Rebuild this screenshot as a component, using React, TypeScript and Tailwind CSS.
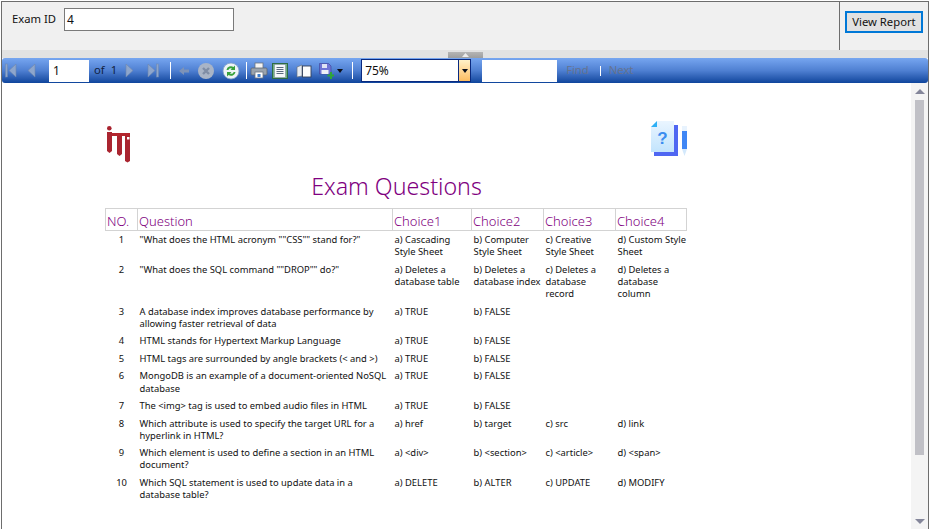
const questions = [
  { no: "1", q: '"What does the HTML acronym ""CSS"" stand for?"', c: ["a) Cascading Style Sheet", "b) Computer Style Sheet", "c) Creative Style Sheet", "d) Custom Style Sheet"] },
  { no: "2", q: '"What does the SQL command ""DROP"" do?"', c: ["a) Deletes a database table", "b) Deletes a database index", "c) Deletes a database record", "d) Deletes a database column"] },
  { no: "3", q: "A database index improves database performance by allowing faster retrieval of data", c: ["a) TRUE", "b) FALSE", "", ""] },
  { no: "4", q: "HTML stands for Hypertext Markup Language", c: ["a) TRUE", "b) FALSE", "", ""] },
  { no: "5", q: "HTML tags are surrounded by angle brackets (< and >)", c: ["a) TRUE", "b) FALSE", "", ""] },
  { no: "6", q: "MongoDB is an example of a document-oriented NoSQL database", c: ["a) TRUE", "b) FALSE", "", ""] },
  { no: "7", q: "The <img> tag is used to embed audio files in HTML", c: ["a) TRUE", "b) FALSE", "", ""] },
  { no: "8", q: "Which attribute is used to specify the target URL for a hyperlink in HTML?", c: ["a) href", "b) target", "c) src", "d) link"] },
  { no: "9", q: "Which element is used to define a section in an HTML document?", c: ["a) <div>", "b) <section>", "c) <article>", "d) <span>"] },
  { no: "10", q: "Which SQL statement is used to update data in a database table?", c: ["a) DELETE", "b) ALTER", "c) UPDATE", "d) MODIFY"] },
];

function Sep() {
  return <div className="h-[17px] w-px bg-white" />;
}

function NavIcon({ flip, bar }: { flip?: boolean; bar?: boolean }) {
  return (
    <svg width="12" height="15" viewBox="0 0 12 15" className={flip ? "-scale-x-100" : ""}>
      {bar && <rect x="0.5" y="1" width="2" height="13" fill="#8ea6cc" stroke="#6f87ad" strokeWidth="0.5" />}
      <path d="M11 1v13L4 7.500z" fill="#8ea6cc" stroke="#6f87ad" strokeWidth="0.6" />
    </svg>
  );
}

function Toolbar() {
  return (
    <div className="flex h-[25px] items-center rounded-[3px] bg-gradient-to-b from-[#77a6f0] via-[#4f80d2] to-[#0e459c] text-[11.25px]">
      <div className="ml-[3px]"><NavIcon bar /></div>
      <div className="ml-[7px]"><NavIcon /></div>
      <div className="ml-[13px] flex h-[22px] w-[40px] items-center bg-white pl-[4px] text-[12px] text-[#111]">1</div>
      <span className="ml-[5px] text-[#10213f]">of</span>
      <span className="ml-[6px] text-[#10213f]">1</span>
      <div className="ml-[8px]"><NavIcon flip /></div>
      <div className="ml-[10px]"><NavIcon flip bar /></div>
      <div className="ml-[11px]"><Sep /></div>
      <svg width="12" height="10" viewBox="0 0 12 10" className="ml-[7px]">
        <path d="M1 5l5-4v2.500h5v3H6V9z" fill="#7d93b8" />
      </svg>
      <svg width="18" height="18" viewBox="0 0 18 18" className="ml-[7px]">
        <circle cx="9" cy="9" r="8" fill="#a9b4c6" />
        <path d="M6 6l6 6M12 6l-6 6" stroke="#7f8da5" strokeWidth="2.400" />
      </svg>
      <svg width="18" height="18" viewBox="0 0 18 18" className="ml-[7px]">
        <circle cx="9" cy="9" r="8" fill="#eef3f6" stroke="#7f9fc8" strokeWidth="0.8" />
        <path d="M4.500 8a4.500 4.500 0 0 1 7-3l1.500-1.500V8H8.500L10 6.500A2.800 2.800 0 0 0 6.300 8z" fill="#38a13c" />
        <path d="M13.500 10a4.500 4.500 0 0 1-7 3L5 14.500V10h4.500L8 11.500A2.800 2.800 0 0 0 11.700 10z" fill="#38a13c" />
      </svg>
      <div className="ml-[6px]"><Sep /></div>
      <svg width="18" height="17" viewBox="0 0 18 17" className="ml-[3px]">
        <rect x="5" y="1" width="8" height="6" fill="#f4f4f4" stroke="#6b7480" strokeWidth="0.8" />
        <rect x="1" y="6" width="16" height="7" rx="1" fill="#9aa3ad" stroke="#5d6670" strokeWidth="0.8" />
        <rect x="5" y="10" width="8" height="6" fill="#fff" stroke="#6b7480" strokeWidth="0.8" />
        <rect x="7.500" y="12" width="3" height="3" fill="#3f7fd0" />
      </svg>
      <svg width="16" height="16" viewBox="0 0 16 16" className="ml-[4px]">
        <rect x="0.500" y="0.500" width="15" height="15" fill="#6fae82" stroke="#2f6b45" />
        <rect x="2.500" y="1.500" width="11" height="13" fill="#f6f8fb" stroke="#7a8798" strokeWidth="0.5" />
        <path d="M4.500 4.500h7M4.500 6.500h7M4.500 8.500h7M4.500 10.500h7" stroke="#4b5a70" strokeWidth="0.9" />
      </svg>
      <svg width="16" height="14" viewBox="0 0 16 14" className="ml-[8px]">
        <path d="M1 3l5-2v11l-5 1z" fill="#e7ecf2" stroke="#66717f" strokeWidth="0.7" />
        <rect x="6.500" y="2" width="8.500" height="11" fill="#fbfcfd" stroke="#33415a" strokeWidth="0.9" />
      </svg>
      <svg width="15" height="16" viewBox="0 0 15 16" className="ml-[7px]">
        <path d="M0.500 0.500h9l2.500 2.500v8h-11.500z" fill="#6f74d6" stroke="#3b3f96" strokeWidth="0.6" />
        <rect x="3" y="1" width="5" height="4" fill="#dfe3f5" />
        <rect x="2.500" y="7" width="7" height="4" fill="#eef0f8" />
        <path d="M11 9h2v2.500h2v2h-2V16h-2v-2.500H8.500v-2H11z" fill="#2fa53a" />
      </svg>
      <svg width="6" height="4" viewBox="0 0 6 4" className="ml-[3px]">
        <path d="M0 0h6L3 4z" fill="#0b0f1a" />
      </svg>
      <div className="ml-[9px]"><Sep /></div>
      <div className="ml-[8px] flex h-[23px] w-[110px] border border-[#0a2a80]">
        <div className="flex flex-1 items-center bg-white pl-[3px] text-[12px] text-[#111]">75%</div>
        <div className="flex w-[12px] items-center justify-center border-l border-[#0a2a80] bg-gradient-to-b from-[#fff2c8] to-[#fdbd5f]">
          <svg width="6" height="4" viewBox="0 0 6 4"><path d="M0 0h6L3 4z" fill="#0b0f1a" /></svg>
        </div>
      </div>
      <div className="ml-[11px] h-[22px] w-[75px] bg-white" />
      <span className="ml-[9px] text-[#66738f]">Find</span>
      <div className="ml-[11px] h-[10px] w-px bg-white" />
      <span className="ml-[8px] text-[#66738f]">Next</span>
    </div>
  );
}

function Logo() {
  return (
    <svg width="26" height="37" viewBox="0 0 26 37">
      <circle cx="4.300" cy="2.300" r="2.300" fill="#a9232f" />
      <path d="M2 6h5v19l-2.500 2L2 25z" fill="#aa2530" />
      <path d="M7 7h18v3H7z" fill="#b3262e" />
      <path d="M12 10h5v18l-2.500 2-2.500-2z" fill="#aa2530" />
      <path d="M20 10h5v25l-2.500 1.500-2.500-1.500z" fill="#aa2530" />
      <rect x="22" y="11" width="2.500" height="2.500" fill="#fff" />
    </svg>
  );
}

function QuestionIcon() {
  return (
    <svg width="36" height="36" viewBox="0 0 36 36">
      <defs>
        <linearGradient id="paper" x1="0" y1="0" x2="0" y2="1">
          <stop offset="0" stopColor="#eaf5ff" />
          <stop offset="1" stopColor="#c2e4fd" />
        </linearGradient>
      </defs>
      <path d="M22 4h5v31H3v-4h19z" fill="#4f67f2" />
      <path d="M6 0h17v31H0V6z" fill="url(#paper)" />
      <path d="M6 0v6H0z" fill="#2fb0f5" />
      <text x="11.500" y="23" textAnchor="middle" fontSize="17" fontWeight="700" fill="#3b8df0" fontFamily="'Liberation Sans', sans-serif">?</text>
      <rect x="31" y="5" width="5" height="5" fill="#e8f3fe" />
      <rect x="31" y="10" width="5" height="18" fill="#3f86f5" />
      <path d="M31 28h5l-2.500 7z" fill="#d4e9fc" />
    </svg>
  );
}

export default function App() {
  return (
    <div className="h-[529px] overflow-hidden bg-white pl-px pt-px font-['Noto_Sans','Liberation_Sans',sans-serif] text-[#111]">
      <div className="flex h-[528px] flex-col border-l border-r border-t border-[#6d6d6d]">
        <div className="flex h-[48px] bg-[#f0f0f0]">
          <div className="flex flex-1 items-start border-r border-[#6d6d6d] pl-[10px] pt-[6px]">
            <span className="mt-[3px] w-[52px] text-[11.25px]">Exam ID</span>
            <div className="flex h-[23px] w-[170px] items-center border border-[#7a7a7a] bg-white pl-[2px] text-[12px]">4</div>
          </div>
          <div className="w-[88px] pl-[5px] pt-[6px]">
            <button className="h-[22px] w-[78px] border-2 border-[#0078d7] bg-[#e1e1e1] text-[11.25px]">View Report</button>
          </div>
        </div>
        <div className="flex h-[8px] justify-center bg-[#e2e2e2]">
          <div className="flex h-[6px] w-[35px] items-center justify-center self-end bg-gradient-to-b from-[#b5b5b5] to-[#9e9e9e]">
            <svg width="7" height="4" viewBox="0 0 7 4"><path d="M0 4h7L3.500 0z" fill="#ececec" /></svg>
          </div>
        </div>
        <Toolbar />
        <div className="flex min-h-0 flex-1">
          <div className="min-w-0 flex-1 pl-[103px] pt-[38px]">
            <div className="flex w-[582px] items-start justify-between">
              <div className="mt-[5px]"><Logo /></div>
              <QuestionIcon />
            </div>
            <h1 className="mt-[7px] w-[582px] pl-[1px] text-center text-[23.2px] font-light leading-[32px] text-[#800080]">Exam Questions</h1>
            <table className="mt-[6px] w-[581px] table-fixed border-collapse text-[9.4px] leading-[12.200px]">
              <colgroup>
                <col className="w-[32px]" />
                <col className="w-[255px]" />
                <col className="w-[79px]" />
                <col className="w-[72px]" />
                <col className="w-[72px]" />
                <col className="w-[71px]" />
              </colgroup>
              <thead>
                <tr className="h-[22px] text-left text-[13px] text-[#800080]">
                  {["NO.", "Question", "Choice1", "Choice2", "Choice3", "Choice4"].map((h) => (
                    <th key={h} className="border border-[#d3d3d3] px-[1px] pt-[2px] font-light leading-[18px]">{h}</th>
                  ))}
                </tr>
              </thead>
              <tbody>
                {questions.map((row) => (
                  <tr key={row.no} className="align-top">
                    <td className="pb-[2.300px] pt-[3px] text-center">{row.no}</td>
                    <td className="pb-[2.300px] pl-[2px] pr-[1px] pt-[3px]">{row.q}</td>
                    {row.c.map((choice, i) => (
                      <td key={i} className={i === 2 ? "pb-[2.300px] pl-[2px] pr-[4px] pt-[3px]" : "pb-[2.300px] pl-[2px] pt-[3px]"}>{choice}</td>
                    ))}
                  </tr>
                ))}
              </tbody>
            </table>
          </div>
          <div className="flex w-[17px] flex-col items-center bg-[#f4f4f4] pt-[6px]">
            <svg width="10" height="5" viewBox="0 0 10 5"><path d="M0 5h10L5 0z" fill="#84869a" /></svg>
            <div className="mt-[6px] h-[355px] w-[9px] bg-[#c0c0c6]" />
            <svg width="10" height="5" viewBox="0 0 10 5" className="mt-[64px]"><path d="M0 0h10L5 5z" fill="#84869a" /></svg>
          </div>
        </div>
      </div>
    </div>
  );
}
